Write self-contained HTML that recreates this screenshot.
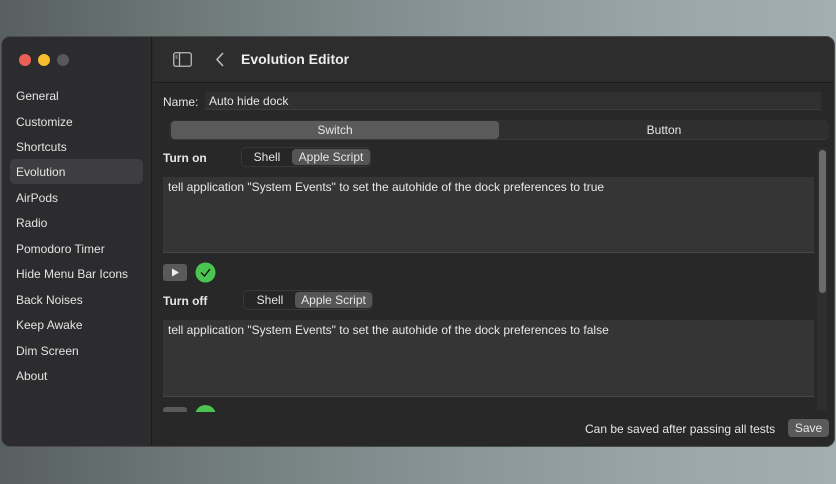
<!DOCTYPE html>
<html><head><style>
*{margin:0;padding:0;box-sizing:border-box}
body{width:836px;height:484px;overflow:hidden;position:relative;font-family:"Liberation Sans",sans-serif;background:linear-gradient(90deg,#58605f 0%,#74807f 30%,#899698 55%,#9aa6a8 80%,#a3aeb0 100%);color:#e6e6e6;font-size:12px}
.win{position:absolute;left:1px;top:36px;width:834px;height:411px;background:#2a2a2a;border-radius:9px;overflow:hidden;border:1px solid #4a4a4a}
.side{position:absolute;left:0;top:0;width:150px;height:100%;background:#2c2c2e;border-right:1px solid #1a1a1a}
.dot{position:absolute;top:17px;width:12px;height:12px;border-radius:50%}
.nav{position:absolute;left:14px;font-size:12px;color:#e4e4e4}
.sel{position:absolute;left:8px;top:122px;width:133px;height:25px;background:#3e3e40;border-radius:5px}
.head{position:absolute;left:151px;top:0;right:0;height:46px;background:#2d2d2d;border-bottom:1px solid #1c1c1c}
.main{position:absolute;left:151px;top:47px;right:0;bottom:0;background:#282828}
.abs{position:absolute}
.ta{position:absolute;left:10px;width:651px;background:#353535;border-bottom:1px solid #474747;font-size:12px;padding:3px 5px;color:#e8e8e8}
.seg{position:absolute;height:20px;background:#262626;border-radius:5px;border:1px solid #383838}
.seg span{position:absolute;top:1px;height:16px;line-height:16px;font-size:12px;text-align:center;border-radius:4px}
</style></head><body>
<div class="win">
<div class="side">
<div class="dot" style="left:17px;background:#ec5f57"></div>
<div class="dot" style="left:36px;background:#f4be2f"></div>
<div class="dot" style="left:55px;background:#58585a"></div>
<div class="sel"></div>
<div class="nav" style="top:52px">General</div>
<div class="nav" style="top:78px">Customize</div>
<div class="nav" style="top:103px">Shortcuts</div>
<div class="nav" style="top:128px">Evolution</div>
<div class="nav" style="top:154px">AirPods</div>
<div class="nav" style="top:179px">Radio</div>
<div class="nav" style="top:205px">Pomodoro Timer</div>
<div class="nav" style="top:230px">Hide Menu Bar Icons</div>
<div class="nav" style="top:256px">Back Noises</div>
<div class="nav" style="top:281px">Keep Awake</div>
<div class="nav" style="top:307px">Dim Screen</div>
<div class="nav" style="top:332px">About</div>
</div>
<div class="head">
<svg class="abs" style="left:20px;top:15px" width="19" height="15" viewBox="0 0 19 15"><rect x="0.75" y="0.75" width="17.5" height="13.5" rx="2" fill="none" stroke="#bbb" stroke-width="1.3"/><line x1="6.5" y1="1" x2="6.5" y2="14" stroke="#bbb" stroke-width="1.3"/><line x1="2.5" y1="4" x2="4.5" y2="4" stroke="#bbb"/><line x1="2.5" y1="6" x2="4.5" y2="6" stroke="#bbb"/></svg>
<svg class="abs" style="left:62px;top:14px" width="10" height="17" viewBox="0 0 10 17"><path d="M8 2 L2 8.5 L8 15" fill="none" stroke="#bbb" stroke-width="1.6"/></svg>
<div class="abs" style="left:88px;top:14px;font-size:14px;font-weight:bold;color:#eee">Evolution Editor</div>
</div>
<div class="main">
<div class="abs" style="left:10px;top:11px;font-size:12px">Name:</div>
<div class="abs" style="left:52px;top:8px;width:616px;height:18px;background:#303030;border-bottom:1px solid #3c3c3c;padding:2px 4px;font-size:12px">Auto hide dock</div>
<div class="abs" style="left:16px;top:36px;width:660px;height:20px;background:#2f2f2f;border-radius:5px;border-bottom:1px solid #3a3a3a"></div>
<div class="abs" style="left:18px;top:37px;width:328px;height:18px;background:#5a5a5a;border-radius:4px;text-align:center;line-height:18px;font-size:12px">Switch</div>
<div class="abs" style="left:346px;top:37px;width:330px;height:18px;text-align:center;line-height:18px;font-size:12px">Button</div>
<div class="abs" style="left:664px;top:64px;width:10px;height:262px;background:#2e2e2e"></div>
<div class="abs" style="left:666px;top:66px;width:7px;height:143px;background:#6b6b6b;border-radius:4px"></div>
<div class="abs" style="left:0;top:60px;width:664px;height:268px;overflow:hidden">
<div class="abs" style="left:10px;top:7px;font-weight:bold;font-size:12px">Turn on</div>
<div class="seg" style="left:88px;top:3px;width:130px"><span style="left:2px;width:46px">Shell</span><span style="left:50px;width:78px;background:#555">Apple Script</span></div>
<div class="ta" style="top:33px;height:76px">tell application "System Events" to set the autohide of the dock preferences to true</div>
<div class="abs" style="left:10px;top:120px;width:24px;height:17px;background:#5a5a5a;border-radius:3px"><svg width="24" height="17"><path d="M9 4.5 L16 8.5 L9 12.5Z" fill="#eee"/></svg></div>
<svg class="abs" style="left:42px;top:118px" width="21" height="21"><circle cx="10.5" cy="10.5" r="10" fill="#4cc451"/><path d="M6 10.5 L9.5 14 L15 7" fill="none" stroke="#111" stroke-width="1.4"/></svg>
<div class="abs" style="left:10px;top:150px;font-weight:bold;font-size:12px">Turn off</div>
<div class="seg" style="left:90px;top:146px;width:130px"><span style="left:2px;width:48px">Shell</span><span style="left:51px;width:77px;background:#555">Apple Script</span></div>
<div class="ta" style="top:176px;height:77px">tell application "System Events" to set the autohide of the dock preferences to false</div>
<div class="abs" style="left:10px;top:263px;width:24px;height:17px;background:#5a5a5a;border-radius:3px"></div>
<div class="abs" style="left:42px;top:261px;width:21px;height:21px;background:#4cc451;border-radius:50%"></div>
</div>
<div class="abs" style="left:432px;top:338px;font-size:12px">Can be saved after passing all tests</div>
<div class="abs" style="left:635px;top:335px;width:41px;height:18px;background:#5a5a5a;border-radius:4px;text-align:center;line-height:18px;font-size:12px">Save</div>
</div>
</div>
</body></html>
